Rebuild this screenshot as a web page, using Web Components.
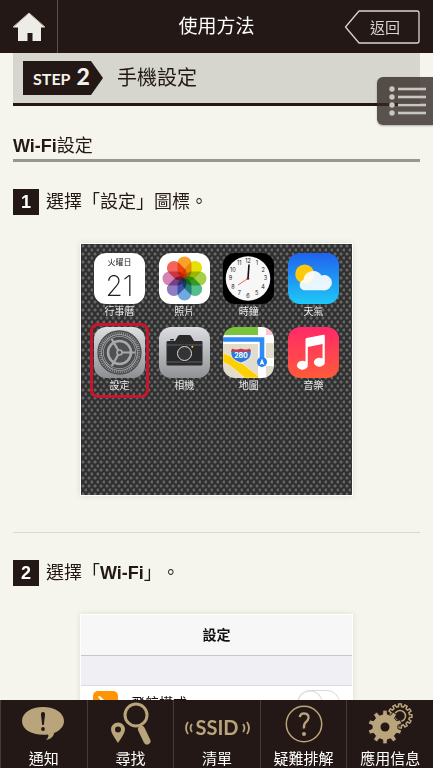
<!DOCTYPE html>
<html lang="zh-Hant">
<head>
<meta charset="utf-8">
<meta name="viewport" content="width=device-width, initial-scale=1">
<title>使用方法</title>
<style>
  html, body { margin: 0; height: 100%; }
  body { font-family: "Liberation Sans", "Noto Sans CJK TC", sans-serif; color: #231815; background: #f6f5ed; text-spacing-trim: space-all; }
</style>
</head>
<body>
<guide-screen>
  <guide-header slot="header">使用方法</guide-header>
  <step-banner step="2">手機設定</step-banner>
  <section-title>Wi-Fi設定</section-title>
  <guide-step number="1">
    選擇「設定」圖標。
    <home-shot slot="shot"></home-shot>
  </guide-step>
  <guide-step number="2">
    選擇「<b>Wi-Fi</b>」。
    <settings-shot slot="shot"></settings-shot>
  </guide-step>
  <list-button slot="float"></list-button>
  <tab-bar slot="footer"></tab-bar>
</guide-screen>

<script>
// Small helper: attach an open root and fill it
function paint(el, html) {
  const shadow = el.shadowRoot || el.attachShadow({ mode: 'open' });
  shadow.innerHTML = html;
  return shadow;
}

class GuideScreen extends HTMLElement {
  connectedCallback() {
    paint(this, `<style>
      :host { display: grid; grid-template-columns: minmax(0, 1fr); grid-template-rows: auto minmax(0, 1fr) auto; height: 100vh; position: relative; }
      main { overflow-y: auto; scrollbar-width: none; padding: 0 13px; }
    </style>
    <slot name="header"></slot>
    <main><slot></slot></main>
    <slot name="float"></slot>
    <slot name="footer"></slot>`);
  }
}

class GuideHeader extends HTMLElement {
  connectedCallback() {
    paint(this, `<style>
      :host { display: grid; grid-template-columns: 1fr auto 1fr; align-items: center; height: 53px; background: #231815; color: #fff; }
      .home { display: flex; align-items: center; justify-content: center; width: 57px; height: 53px; border-right: 1px solid #5b514d; }
      h1 { margin: 0; font-size: 19px; line-height: 28px; font-weight: 400; }
      .back { justify-self: end; display: grid; place-items: center; width: 76px; height: 34px; margin-right: 13px; padding: 0; border: 0; background: none; color: #d8d4cf; font: inherit; font-size: 15px; cursor: pointer; }
      .back svg, .back span { grid-area: 1 / 1; }
      .back span { padding-left: 6px; }
    </style>
    <a class="home" href="#" aria-label="Home">
      <svg width="34" height="30" viewBox="0 0 34 30"><path d="M17 1 33 15.500H29V29H20.500V21H15.500V29H6V15.500H1Z" fill="#eeece6"/><path d="M1 15 17 1 33 15" fill="none" stroke="#cbbfa9"/></svg>
    </a>
    <h1><slot></slot></h1>
    <button class="back" type="button">
      <svg width="76" height="34" viewBox="0 0 76 34"><path d="M15 1H73Q75 1 75 3V31Q75 33 73 33H15L1.500 17Z" fill="none" stroke="#d8d4cf" stroke-width="1.300" stroke-linejoin="round"/></svg>
      <span>返回</span>
    </button>`);
  }
}

class StepBanner extends HTMLElement {
  connectedCallback() {
    paint(this, `<style>
      :host { display: flex; align-items: center; gap: 14px; height: 50px; padding: 0 10px; background: #d6d6ce; border-bottom: 3px solid #231815; }
      .tag { display: flex; align-items: baseline; gap: 6px; box-sizing: border-box; width: 80px; height: 34px; padding-left: 10px; background: #231815; color: #f3f1ea; clip-path: polygon(0 0, 68px 0, 100% 50%, 68px 100%, 0 100%); font-family: Lato, sans-serif; font-weight: 700; font-size: 16px; line-height: 30px; }
      .tag b { font-size: 23px; }
      h2 { margin: 0; font-size: 20px; line-height: 30px; font-weight: 400; }
    </style>
    <div class="tag">STEP <b>${this.getAttribute('step')}</b></div>
    <h2><slot></slot></h2>`);
  }
}

class SectionTitle extends HTMLElement {
  connectedCallback() {
    paint(this, `<style>
      :host { display: block; margin-top: 27px; border-bottom: 3px solid #969992; }
      h3 { margin: 0; font-size: 18px; line-height: 26px; font-weight: 400; }
      h3 b { font-weight: 700; }
    </style>
    <h3>${this.textContent.trim().replace('Wi-Fi', '<b>Wi-Fi</b>')}</h3>`);
  }
}

class GuideStep extends HTMLElement {
  connectedCallback() {
    paint(this, `<style>
      :host { display: block; padding: 27px 0 36px; border-bottom: 1px solid #d9d8cb; }
      .line { display: flex; align-items: center; gap: 7px; font-size: 18px; line-height: 26px; }
      .num { width: 26px; height: 26px; background: #231815; color: #fff; text-align: center; font-weight: 700; }
      .shot { width: 66.6%; max-width: 540px; margin: 28px auto 0; border: 1px solid #fff; box-shadow: 0 0 5px #dddccf; }
    </style>
    <div class="line"><span class="num">${this.getAttribute('number')}</span><span><slot></slot></span></div>
    <div class="shot"><slot name="shot"></slot></div>`);
  }
}

class AppIcon extends HTMLElement {
  connectedCallback() {
    const art = AppIcon.art[this.getAttribute('name')]();
    paint(this, `<style>
      :host { display: flex; flex-direction: column; align-items: center; color: #e8e8e8; }
      svg { display: block; width: 51px; height: 51px; border-radius: 12px; }
      span { font-size: 10px; line-height: 16px; white-space: nowrap; }
    </style>
    <svg viewBox="0 0 51 51" font-family="Inter, 'Noto Sans CJK TC', sans-serif">${art}</svg>
    <span><slot></slot></span>`);
  }
}

const fade = (id, from, to) =>
  `<linearGradient id="${id}" x1="0" y1="0" x2="0" y2="1"><stop stop-color="${from}"/><stop offset="1" stop-color="${to}"/></linearGradient><rect width="51" height="51" fill="url(#${id})"/>`;

AppIcon.art = {
  calendar: () => `<rect width="51" height="51" fill="#fff"/>
    <text x="25.500" y="12" font-size="8" text-anchor="middle" fill="#222" font-family="'Noto Sans CJK TC', sans-serif">火曜日</text>
    <text x="25.500" y="43" font-size="28" font-weight="200" text-anchor="middle" fill="#222" font-family="Inter, Lato, sans-serif">21</text>`,

  photos: () => {
    const petals = ['#f9a12b', '#e8e000', '#a6cf45', '#53bd8b', '#6fa9e0', '#8d7cc0', '#d384b4', '#f4655c'];
    return '<rect width="51" height="51" fill="#fff"/>' + petals.map((c, i) =>
      `<rect x="18.500" y="3.500" width="14" height="22" rx="7" fill="${c}" style="mix-blend-mode:multiply" transform="rotate(${i * 45} 25.500 25.500)"/>`
    ).join('');
  },

  clock: () => {
    let nums = '';
    for (let h = 1; h <= 12; h++) {
      const a = h * Math.PI / 6;
      nums += `<text x="${25 + 17.5 * Math.sin(a)}" y="${27.3 - 17.5 * Math.cos(a)}" font-size="5.500" text-anchor="middle" fill="#222">${h}</text>`;
    }
    return `<rect width="51" height="51" fill="#000"/><circle cx="25" cy="25.500" r="22.300" fill="#f7f7f7"/>${nums}
      <path d="M25 25.500 26 11.500" stroke="#111" stroke-width="1.600"/>
      <path d="M25 25.500 15 32" stroke="#e8452f" stroke-width=".8"/><circle cx="25" cy="25.500" r="1.300" fill="#7b1d16"/>`;
  },

  weather: () => fade('sky', '#1f63ee', '#1fc8f8') + `
    <circle cx="16.700" cy="21" r="9.500" fill="#fdc90a"/>
    <path d="M16 37.300A5.300 5.300 0 0 1 15.500 27A9.800 9.800 0 0 1 33.500 22.500A7.700 7.700 0 1 1 35 37.300Z" fill="#fff" fill-opacity=".9"/>`,

  settings: () => fade('steel', '#dedfe1', '#8d8e92') + `
    <g fill="none" transform="translate(25.500 25.500)">
      <circle r="21.500" fill="#a4a5a7" stroke="#4b4c4e" stroke-width="1.300"/>
      <circle r="19.500" stroke="#4b4c4e" stroke-width="2.500" stroke-dasharray="1.300 .7"/>
      <circle r="17" stroke="#4b4c4e" stroke-width="1"/>
      <circle r="13.500" fill="#505153" stroke="#4b4c4e" stroke-width="4.500"/>
      <circle r="11.500" stroke="#a9aaac" stroke-width="2.500"/>
      <path d="M0 0H15.500M0 0-7.700-13.400M0 0-7.700 13.400" stroke="#a9aaac" stroke-width="2.200"/>
      <circle r="2.500" fill="#505153" stroke="#a9aaac" stroke-width="1.600"/>
    </g>`,

  camera: () => fade('alu', '#dcdde0', '#919296') + `
    <path d="M7.500 15Q7.500 14 9 14H16L19 9Q19.500 8 21 8H30Q31.500 8 32 9L35 14H42Q43.500 14 43.500 15V37Q43.500 38.500 42 38.500H9Q7.500 38.500 7.500 37Z" fill="#29292b"/>
    <rect x="11" y="12" width="4" height="1.500" rx=".7" fill="#29292b"/>
    <path d="M7.500 18H43.500M7.500 35H43.500" stroke="#77787a" stroke-width=".7"/>
    <circle cx="25.500" cy="26.500" r="8.800" fill="#29292b"/>
    <circle cx="25.500" cy="26.500" r="7" fill="#343436" stroke="#ddd"/>
    <circle cx="33.300" cy="19.700" r="1" fill="#ffd400"/>`,

  map: () => `<rect width="51" height="51" fill="#e2dccd"/>
    <path d="M0 0H35V8H0Z" fill="#78c53b"/><path d="M43 0H51V8H43Z" fill="#f9c6d2"/>
    <path d="M0 26Q10 29 16 34T38 51H22L10 41Q5 37 0 35Z" fill="#fdd006" stroke="#fff3b0" stroke-width=".6"/>
    <path d="M35 0H43V8H51V16H43V31H51V39H43V51H35V17H0V8H35Z" fill="#fff"/>
    <path d="M0 12.500H39V33" fill="none" stroke="#2f8cf7" stroke-width="4.600"/>
    <path d="M9 22Q13 24 18 22Q23 24 27 22Q29 24 28 28Q27 33 18 36Q9 33 8 28Q7 24 9 22Z" fill="#2e79d6" stroke="#fff" stroke-width=".8"/>
    <path d="M9 21.500Q13 23.500 18 21.500Q23 23.500 27 21.500L28 24.500H8Z" fill="#d8353a"/>
    <text x="18" y="31" font-size="7" font-weight="700" text-anchor="middle" fill="#fff">280</text>
    <circle cx="39" cy="35" r="5" fill="#2180f3"/><path d="M39 31.500 41.500 38 39 36.800 36.500 38Z" fill="#fff"/>`,

  music: () => fade('tune', '#ff2968', '#ff5a3a') + `
    <path d="M17.500 12.500Q17.500 11.300 18.700 11L35.500 7.800Q36.800 7.600 36.800 9V34.500A5.500 4.500 0 1 1 34.500 31.500V17L19.800 20V37.500A5.500 4.500 0 1 1 17.500 34.500Z" fill="#fff"/>`
};

class HomeShot extends HTMLElement {
  connectedCallback() {
    const apps = [
      ['calendar', '行事曆'], ['photos', '照片'], ['clock', '時鐘'], ['weather', '天氣'],
      ['settings', '設定'], ['camera', '相機'], ['map', '地圖'], ['music', '音樂']
    ];
    paint(this, `<style>
      :host { display: block; min-height: 251px; background: radial-gradient(circle at 2px 2px, #666 1px, transparent 2px) 0 0 / 6px 8px, radial-gradient(circle at 5px 6px, #666 1px, transparent 2px) 0 0 / 6px 8px, #303031; }
      .grid { display: grid; grid-template-columns: repeat(4, 51px); justify-content: space-between; row-gap: 7px; padding: 9px 13px; }
      .picked { outline: 3px solid #c8152d; outline-offset: 1px; border-radius: 4px; }
    </style>
    <div class="grid">
      ${apps.map(([name, label]) => `<app-icon name="${name}" class="${name === 'settings' ? 'picked' : ''}">${label}</app-icon>`).join('')}
    </div>`);
  }
}

class SettingsShot extends HTMLElement {
  connectedCallback() {
    paint(this, `<style>
      :host { display: block; background: #efeff4; color: #111; font-size: 14px; }
      h4 { margin: 0; font-size: 14px; line-height: 40px; font-weight: 600; text-align: center; background: #f7f7f7; border-bottom: 1px solid #c8c7cc; }
      label { display: flex; align-items: center; gap: 13px; margin-top: 29px; padding: 4px 12px; background: #fff; border-top: 1px solid #dcdce0; line-height: 26px; }
      label svg { flex: none; }
      input { appearance: none; width: 43px; height: 26px; margin: 0 0 0 auto; border: 1px solid #dadada; border-radius: 13px; background: radial-gradient(circle at 12px 12px, #fff 11px, #dadada 12px, #fff 13px); }
    </style>
    <h4>設定</h4>
    <label>
      <svg width="25" height="25" viewBox="0 0 25 25"><rect width="25" height="25" rx="5" fill="#ff9500"/><path d="M5 6Q6 4 8 6L12 10 20 9 21 11 15 13 18 18 21 19 20 20 16 20 15 16 11 13 8 19 6 18 8 12 9 11Z" fill="#fff"/></svg>
      飛航模式
      <input type="checkbox" role="switch">
    </label>`);
  }
}

class ListButton extends HTMLElement {
  connectedCallback() {
    const rows = [12, 20, 28, 36].map(y =>
      `<circle cx="15" cy="${y}" r="2.700"/><rect x="21" y="${y - 1.3}" width="28" height="2.600"/>`).join('');
    // Floats over the scrolling content
    paint(this, `<style>
      :host { position: absolute; top: 77px; right: 0; }
      button { display: block; width: 56px; height: 48px; padding: 0; border: 0; border-radius: 6px 0 0 6px; background: rgba(50, 41, 37, .8); box-shadow: 0 1px 2px rgba(0, 0, 0, .3); cursor: pointer; }
      svg { display: block; }
    </style>
    <button type="button" aria-label="Menu"><svg width="56" height="48" fill="#c9c6c0">${rows}</svg></button>`);
  }
}

// Outline of a gear centred on cx, cy
function gear(cx, cy, outer, inner, teeth) {
  const pts = [];
  for (let i = 0; i < teeth; i++) {
    [[-.3, inner], [-.2, outer], [.2, outer], [.3, inner]].forEach(([t, r]) => {
      const a = (i + t) * 2 * Math.PI / teeth;
      pts.push((cx + r * Math.sin(a)).toFixed(1) + ' ' + (cy - r * Math.cos(a)).toFixed(1));
    });
  }
  return 'M' + pts.join('L') + 'Z';
}

class TabBar extends HTMLElement {
  connectedCallback() {
    const tabs = [
      ['通知', `<path d="M42 7C54 7 63 13 63 21C63 27 58 31 53 33C53 36 50 39 45 40C47 38 48 36 47 34.500C32 36 21 30 21 21C21 13 30 7 42 7Z"/>
        <path d="M42 12Q44.300 12 44 15L42.800 25H41.200L40 15Q39.700 12 42 12Z" fill="#231815"/><circle cx="42" cy="29" r="1.900" fill="#231815"/>`],
      ['尋找', `<circle cx="49" cy="15" r="11" fill="none" stroke="#b9a47c" stroke-width="3"/>
        <path d="M54.500 29.500 60 41" stroke="#b9a47c" stroke-width="7" stroke-linecap="round"/><path d="M53 25 55 29" stroke="#b9a47c" stroke-width="3"/>
        <path d="M31 43Q24 33 24 29.500A7 7 0 0 1 38 29.500Q38 33 31 43ZM31 26.500A3 3 0 1 0 31 32.500A3 3 0 1 0 31 26.500Z" fill-rule="evenodd"/>`],
      ['清單', `<text x="43" y="35" font-family="Lato, sans-serif" font-weight="700" font-size="20" text-anchor="middle">SSID</text>
        <path d="M14 22Q10 28 14 34M18 24Q15 28 18 32M69 24Q72 28 69 32M73 22Q77 28 73 34" fill="none" stroke="#b9a47c" stroke-width="1.800"/>`],
      ['疑難排解', `<circle cx="43" cy="24" r="17.700" fill="none" stroke="#b9a47c" stroke-width="1.500"/>
        <path d="M38.500 17Q40 13 43.500 13.500Q48 14 47.500 18Q47 20.500 44.500 22.500Q42.500 24.500 43 28.500" fill="none" stroke="#b9a47c" stroke-width="2.300"/><circle cx="43" cy="34" r="2"/>`],
      ['應用信息', `<path d="${gear(53, 16, 12, 9.5, 12)}" fill="none" stroke="#b9a47c" stroke-width="1.500"/><circle cx="53" cy="16" r="5.500" fill="none" stroke="#b9a47c" stroke-width="1.500"/>
        <path d="${gear(38, 27, 17, 13, 10)}" stroke="#231815"/><circle cx="38" cy="27" r="4.500" fill="#231815"/>`]
    ];
    paint(this, `<style>
      :host { display: block; background: #231815; }
      nav { display: grid; grid-template-columns: repeat(5, minmax(0, 1fr)); }
      a { display: flex; flex-direction: column; align-items: center; height: 68px; border-left: 1px solid #463b36; color: #fff; text-decoration: none; font-size: 15px; line-height: 18px; white-space: nowrap; }
      svg { display: block; flex: none; fill: #b9a47c; }
    </style>
    <nav>${tabs.map(([label, art]) => `<a href="#"><svg width="86" height="50" viewBox="0 0 86 50">${art}</svg>${label}</a>`).join('')}</nav>`);
  }
}

customElements.define('guide-screen', GuideScreen);
customElements.define('guide-header', GuideHeader);
customElements.define('step-banner', StepBanner);
customElements.define('section-title', SectionTitle);
customElements.define('guide-step', GuideStep);
customElements.define('app-icon', AppIcon);
customElements.define('home-shot', HomeShot);
customElements.define('settings-shot', SettingsShot);
customElements.define('list-button', ListButton);
customElements.define('tab-bar', TabBar);
</script>
</body>
</html>
